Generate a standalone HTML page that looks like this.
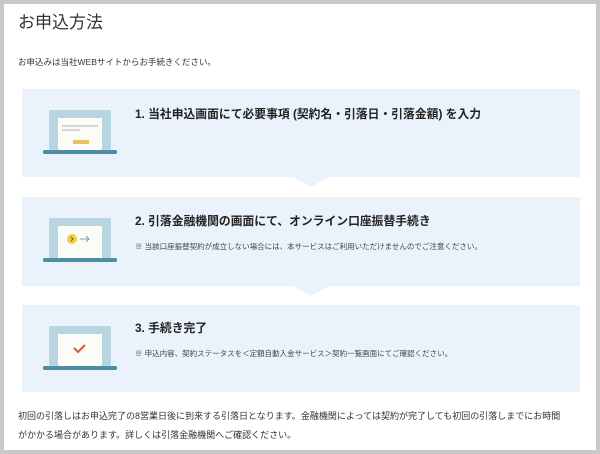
<!DOCTYPE html>
<html><head><meta charset="utf-8"><style>
*{margin:0;padding:0;box-sizing:border-box}
body{width:600px;height:454px;background:#c9c9c9;font-family:"Liberation Sans","Noto Sans CJK JP",sans-serif;color:#222;position:relative;overflow:hidden}
.card{position:absolute;left:4px;top:4px;width:592px;height:446px;background:#fff}
.a{position:absolute;white-space:nowrap}
.panel{position:absolute;left:18px;width:558px;background:#eaf3fc}
.tri{position:absolute;left:271px;bottom:-10px;width:0;height:0;border-left:18px solid transparent;border-right:18px solid transparent;border-top:10px solid #eaf3fc}
.h{position:absolute;left:113px;font-size:11.8px;font-weight:bold;color:#222}
.n{position:absolute;left:113px;font-size:7.5px;color:#444}
</style></head><body>
<div class="card">
<div class="a" style="left:14px;top:4px;font-size:17px;color:#333">お申込方法</div>
<div class="a" style="left:14px;top:52px;font-size:8.5px;color:#333">お申込みは当社WEBサイトからお手続きください。</div>

<div class="panel" style="top:85px;height:88px"><div class="tri"></div>
<svg class="a" style="left:21px;top:17px" width="76" height="50"><rect x="6" y="4" width="62" height="40" rx="2" fill="#b7d6e0"/><rect x="15" y="12" width="44" height="32" fill="#fbfbf8"/><rect x="19" y="19" width="36" height="2" fill="#d4d8dc"/><rect x="19" y="23" width="18" height="2" fill="#d4d8dc"/><rect x="30" y="34" width="16" height="4" fill="#e8c25a"/><rect x="0" y="44" width="74" height="4" rx="1.5" fill="#4d8ea3"/></svg>
<div class="h" style="top:16px">1. 当社申込画面にて必要事項 (契約名・引落日・引落金額) を入力</div>
</div>

<div class="panel" style="top:193px;height:89px"><div class="tri"></div>
<svg class="a" style="left:21px;top:17px" width="76" height="50"><rect x="6" y="4" width="62" height="40" rx="2" fill="#b7d6e0"/><rect x="15" y="12" width="44" height="32" fill="#fbfbf8"/><circle cx="29" cy="25" r="5" fill="#f0d040"/><path d="M28 23l2 2-2 2" stroke="#555" fill="none" stroke-width="1"/><path d="M37 25h9M43 22l3 3-3 3" stroke="#7aa0b8" fill="none" stroke-width="1"/><rect x="0" y="44" width="74" height="4" rx="1.5" fill="#4d8ea3"/></svg>
<div class="h" style="top:15px">2. 引落金融機関の画面にて、オンライン口座振替手続き</div>
<div class="n" style="top:44px">※ 当該口座振替契約が成立しない場合には、本サービスはご利用いただけませんのでご注意ください。</div>
</div>

<div class="panel" style="top:301px;height:87px">
<svg class="a" style="left:21px;top:17px" width="76" height="50"><rect x="6" y="4" width="62" height="40" rx="2" fill="#b7d6e0"/><rect x="15" y="12" width="44" height="32" fill="#fbfbf8"/><path d="M31 26l4 4 7-7" stroke="#d9604a" fill="none" stroke-width="2.2"/><rect x="0" y="44" width="74" height="4" rx="1.5" fill="#4d8ea3"/></svg>
<div class="h" style="top:14px">3. 手続き完了</div>
<div class="n" style="top:43px">※ 申込内容、契約ステータスを＜定額自動入金サービス＞契約一覧画面にてご確認ください。</div>
</div>

<div class="a" style="left:14px;top:405px;font-size:9px;color:#333">初回の引落しはお申込完了の8営業日後に到来する引落日となります。金融機関によっては契約が完了しても初回の引落しまでにお時間</div>
<div class="a" style="left:14px;top:424px;font-size:9px;color:#333">がかかる場合があります。詳しくは引落金融機関へご確認ください。</div>
</div>
</body></html>
